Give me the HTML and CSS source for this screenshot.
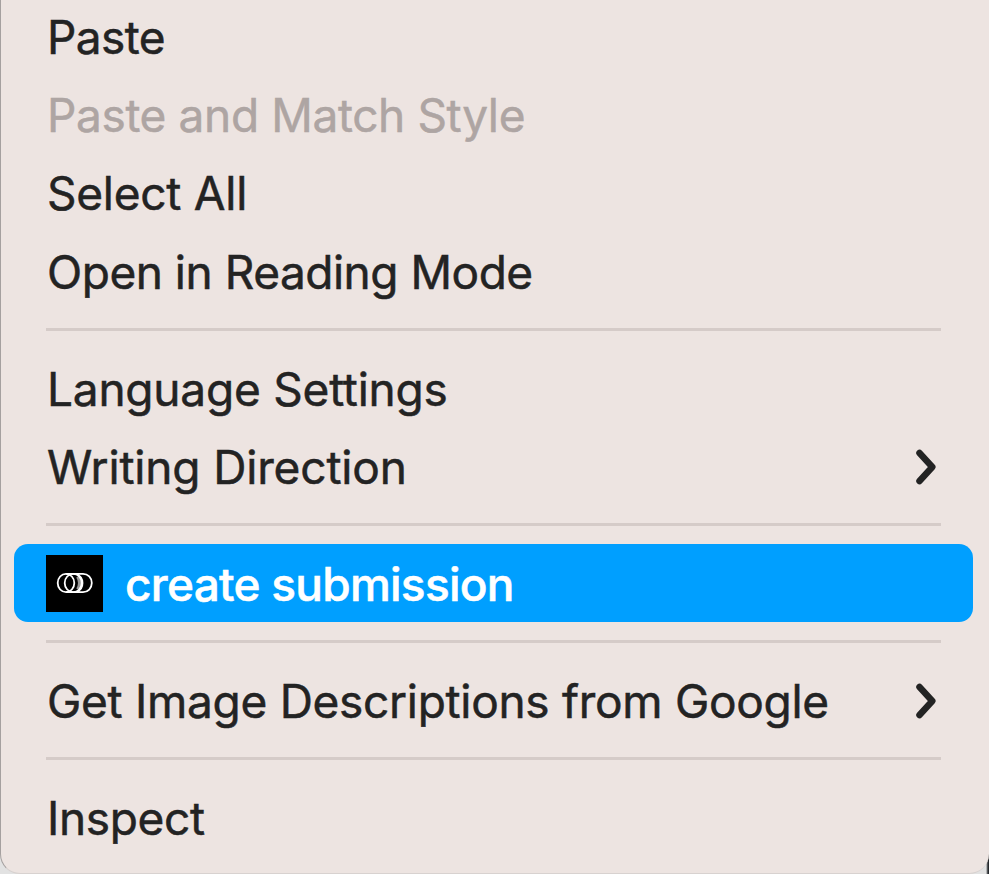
FILE: index.html
```
<!DOCTYPE html>
<html lang="en">
<head>
<meta charset="utf-8">
<title>Context menu</title>
<link rel="stylesheet" href="styles.css">
</head>
<body>
<div class="menu" role="menu">
  <div class="item edit paste" role="menuitem"><span class="label">Paste</span></div>
  <div class="item edit match disabled" role="menuitem"><span class="label">Paste and Match Style</span></div>
  <div class="item edit select" role="menuitem"><span class="label">Select All</span></div>
  <div class="item reading" role="menuitem"><span class="label">Open in Reading Mode</span></div>
  <div class="separator"></div>
  <div class="item language" role="menuitem"><span class="label">Language Settings</span></div>
  <div class="item writing" role="menuitem"><span class="label">Writing Direction</span>
    <svg class="chevron" viewBox="0 0 22 36"><path d="M3.5 4 16.3 18 3.5 32"/></svg></div>
  <div class="separator"></div>
  <div class="item create active" role="menuitem">
    <svg class="logo" viewBox="0 0 57 57"><rect width="57" height="57"/><path class="shade" d="M32 21.5Q36 28 32 34.5"/><ellipse cx="20" cy="28" rx="8.3" ry="9.2"/><ellipse cx="27.2" cy="28" rx="8.5" ry="9.2"/><path d="M20 18.8H37A8.8 9.2 0 0 1 37 37.2H20M31 19.5Q36.5 21.5 36.5 28T31 36.5"/></svg>
    <span class="label">create submission</span></div>
  <div class="separator"></div>
  <div class="item images" role="menuitem"><span class="label">Get Image Descriptions from Google</span>
    <svg class="chevron" viewBox="0 0 22 36"><path d="M3.5 4 16.3 18 3.5 32"/></svg></div>
  <div class="separator"></div>
  <div class="item inspect" role="menuitem"><span class="label">Inspect</span></div>
</div>
</body>
</html>
```
FILE: styles.css
```
* { box-sizing: border-box; }
body {
  margin: 0;
  height: 874px;
  overflow: hidden;
  background: linear-gradient(to right, #e2e2e2 986px, #25282c 988px);
  font-family: Inter, "Liberation Sans", sans-serif;
}
.menu {
  height: 876px;
  margin-top: -2px;
  padding: 0 16px 0 13px;
  background: #ede4e1;
  border-left: 1px solid #a5a09f;
  border-bottom: 1px solid #d8d2d0;
  border-radius: 0 0 20px 20px;
  overflow: hidden;
}
.item {
  display: flex;
  align-items: center;
  height: 78px;
  padding: 1px 35px 0 33px;
  color: #232323;
  font-size: 46px;
  line-height: 76px;
  white-space: nowrap;
  -webkit-text-stroke: 0.5px currentColor;
}
.edit { padding: 0 35px 1px 33px; }
.paste { letter-spacing: -0.6px; }
.match { letter-spacing: -0.37px; }
.select { letter-spacing: -0.25px; }
.reading { letter-spacing: -0.48px; }
.language { letter-spacing: -0.22px; }
.writing { letter-spacing: -0.16px; }
.create { letter-spacing: -0.75px; }
.images { letter-spacing: -0.29px; }
.inspect { letter-spacing: -0.35px; }
.disabled { color: #aea5a3; }
.active {
  padding: 0 35px 0 32px;
  background: #009fff;
  border-radius: 14px;
  color: #fff;
  font-weight: 500;
}
.active .label { padding-top: 1px; }
.separator {
  height: 39px;
  padding: 18px 32px;
}
.separator::before {
  content: "";
  display: block;
  height: 3px;
  background: #d5cbc8;
}
.chevron {
  width: 22px;
  height: 36px;
  margin-left: auto;
  fill: none;
  stroke: #232323;
  stroke-width: 6.5;
  stroke-linecap: round;
  stroke-linejoin: round;
}
.logo {
  width: 57px;
  height: 57px;
  margin-right: 22px;
  fill: none;
  stroke: #fff;
  stroke-width: 1.8;
}
.logo rect { fill: #000; stroke: none; }
.logo .shade { stroke: #999; stroke-width: 4; }
```
